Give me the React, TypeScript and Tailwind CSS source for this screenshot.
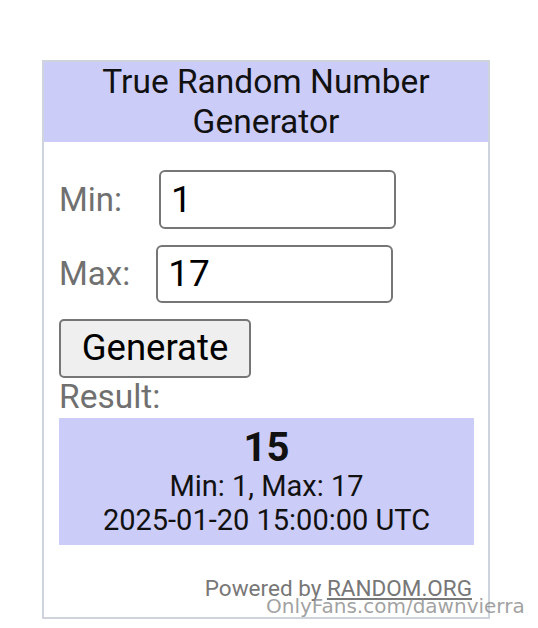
export default function App() {
    return (
        <div className="relative h-[628px] w-[538px] bg-white font-['Roboto',sans-serif]">
            <div className="pt-[60px] pl-[42px]">
                <div className="flex h-[559px] w-[448px] flex-col border-2 border-[#cfd3dc]">
                    <div className="bg-[#ccccf8] text-center text-[33.5px] leading-[40px] text-[#111]">
                        True Random Number
                        <br />
                        Generator
                    </div>

                    <div className="flex flex-col px-[15px] pt-[28px]">
                        <div className="flex items-center">
                            <span className="text-[33px] text-[#707070]">Min:</span>
                            <div className="ml-[37px] flex h-[59px] w-[237px] items-center rounded-[6px] border-2 border-[#767676] pl-[10px] text-[37px] text-black">
                                1
                            </div>
                        </div>

                        <div className="mt-[16px] flex items-center">
                            <span className="text-[33px] text-[#707070]">Max:</span>
                            <div className="ml-[26px] flex h-[58px] w-[237px] items-center rounded-[6px] border-2 border-[#767676] pl-[10px] text-[37px] text-black">
                                17
                            </div>
                        </div>

                        <button className="mt-[16px] h-[59px] w-[192px] rounded-[5px] border-2 border-[#767676] bg-[#efefef] text-[36.5px] leading-none text-black">
                            Generate
                        </button>

                        <span className="text-[33.5px] leading-[38px] text-[#707070]">Result:</span>

                        <div className="mt-[2px] flex h-[127px] w-[415px] flex-col items-center justify-center bg-[#ccccf8] text-[#111]">
                            <span className="text-[40px] font-bold leading-[42px]">15</span>
                            <span className="text-[29px] leading-[34px]">Min: 1, Max: 17</span>
                            <span className="text-[29px] leading-[34px]">2025-01-20 15:00:00 UTC</span>
                        </div>

                        <div className="mt-[27px] pr-[1px] text-right text-[22.5px] text-[#777]">
                            Powered by <span className="underline">RANDOM.ORG</span>
                        </div>
                    </div>
                </div>
            </div>

            <span className="absolute top-[591px] left-[266px] font-['DejaVu_Sans',sans-serif] text-[20px] text-[#888]/80">
                OnlyFans.com/dawnvierra
            </span>
        </div>
    );
}
